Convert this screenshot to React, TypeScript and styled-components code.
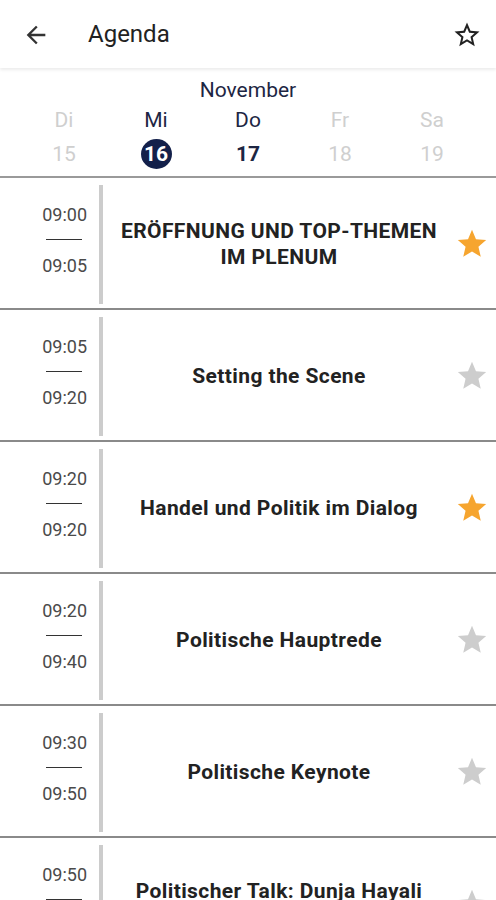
import styled, { createGlobalStyle } from 'styled-components';

interface Session {
    start: string;
    end: string;
    title: string[];
    favorite: boolean;
}

const sessions: Session[] = [
    { start: '09:00', end: '09:05', title: ['ERÖFFNUNG UND TOP-THEMEN', 'IM PLENUM'], favorite: true },
    { start: '09:05', end: '09:20', title: ['Setting the Scene'], favorite: false },
    { start: '09:20', end: '09:20', title: ['Handel und Politik im Dialog'], favorite: true },
    { start: '09:20', end: '09:40', title: ['Politische Hauptrede'], favorite: false },
    { start: '09:30', end: '09:50', title: ['Politische Keynote'], favorite: false },
    { start: '09:50', end: '10:20', title: ['Politischer Talk: Dunja Hayali', 'im Gespräch'], favorite: false },
];

const days = [
    { label: 'Di', num: '15', state: 'off' },
    { label: 'Mi', num: '16', state: 'selected' },
    { label: 'Do', num: '17', state: 'on' },
    { label: 'Fr', num: '18', state: 'off' },
    { label: 'Sa', num: '19', state: 'off' },
] as const;

type DayState = 'off' | 'on' | 'selected';

const STAR = 'M12 17.27L18.18 21l-1.64-7.03L22 9.24l-7.19-.61L12 2 9.19 8.63 2 9.24l5.46 4.73L5.82 21z';
const STAR_BORDER =
    'M22 9.24l-7.19-.62L12 2 9.19 8.63 2 9.24l5.46 4.73L5.82 21 12 17.27 18.18 21l-1.63-7.03L22 9.24zM12 15.4l-3.76 2.27 1-4.28-3.32-2.88 4.38-.38L12 6.1l1.71 4.04 4.38.38-3.32 2.88 1 4.28L12 15.4z';
const ARROW_BACK = 'M20 11H7.83l5.59-5.59L12 4l-8 8 8 8 1.41-1.41L7.83 13H20v-2z';

const App = () => {
    return (
        <>
            <GlobalStyle />
            <Page>
                <TopBar>
                    <IconButton>
                        <svg width='28' height='28' viewBox='0 0 24 24'>
                            <path d={ARROW_BACK} fill='#333' />
                        </svg>
                    </IconButton>
                    <Title>Agenda</Title>
                    <IconButton>
                        <svg width='30' height='30' viewBox='0 0 24 24'>
                            <path d={STAR_BORDER} fill='#222' />
                        </svg>
                    </IconButton>
                </TopBar>

                <Calendar>
                    <Month>November</Month>
                    <DayGrid>
                        {days.map((d) => (
                            <Day key={d.num}>
                                <DayLabel $state={d.state}>{d.label}</DayLabel>
                                <DayNumber $state={d.state}>{d.num}</DayNumber>
                            </Day>
                        ))}
                    </DayGrid>
                </Calendar>

                {sessions.map((s, index) => (
                    <Row key={index}>
                        <Times>
                            <span>{s.start}</span>
                            <Dash />
                            <span>{s.end}</span>
                        </Times>
                        <Bar />
                        <SessionTitle>
                            {s.title.map((line) => (
                                <div key={line}>{line}</div>
                            ))}
                        </SessionTitle>
                        <StarCell>
                            <svg width='34' height='34' viewBox='0 0 24 24'>
                                <path d={STAR} fill={s.favorite ? '#f6a52f' : '#cdcdcd'} />
                            </svg>
                        </StarCell>
                    </Row>
                ))}
            </Page>
        </>
    );
};

export default App;

const GlobalStyle = createGlobalStyle`
    body {
        margin: 0;
        background: #ffffff;
        font-family: Roboto, 'Liberation Sans', sans-serif;
        overflow: hidden;
    }
`;

const Page = styled.div`
    width: 496px;
    height: 900px;
    overflow: hidden;
    background: #fff;
`;

const TopBar = styled.div`
    position: relative;
    z-index: 1;
    height: 68px;
    display: flex;
    align-items: center;
    padding: 0 14px 0 21px;
    box-shadow: 0 2px 3px rgba(0, 0, 0, 0.08);
`;

const IconButton = styled.div`
    width: 30px;
    height: 30px;
    display: flex;
    align-items: center;
    justify-content: center;
    margin-top: 2px;
`;

const Title = styled.div`
    flex: 1;
    margin-left: 37px;
    font-size: 24px;
    color: #222;
`;

const Calendar = styled.div`
    padding: 9px 18px 7px;
    border-bottom: 2px solid #9a9a9a;
`;

const Month = styled.div`
    text-align: center;
    font-size: 21px;
    line-height: 26px;
    color: #1d2643;
`;

const DayGrid = styled.div`
    display: grid;
    grid-template-columns: repeat(5, 1fr);
    margin-top: 3px;
`;

const Day = styled.div`
    display: flex;
    flex-direction: column;
    align-items: center;
    gap: 5px;
`;

const DayLabel = styled.div<{ $state: DayState }>`
    font-size: 21px;
    line-height: 28px;
    color: ${(p) => (p.$state === 'off' ? '#cfcfcf' : '#1d2643')};
`;

const DayNumber = styled.div<{ $state: DayState }>`
    width: 31px;
    height: 30px;
    border-radius: 50%;
    display: flex;
    align-items: center;
    justify-content: center;
    font-size: 21px;
    font-weight: ${(p) => (p.$state === 'off' ? 400 : 700)};
    color: ${(p) => (p.$state === 'off' ? '#cfcfcf' : p.$state === 'selected' ? '#fff' : '#1d2643')};
    background: ${(p) => (p.$state === 'selected' ? '#13204a' : 'transparent')};
`;

const Row = styled.div`
    height: 130px;
    display: grid;
    grid-template-columns: 99px 4px 1fr 41px;
    border-bottom: 2px solid #8a8a8a;
`;

const Times = styled.div`
    display: flex;
    flex-direction: column;
    align-items: flex-end;
    justify-content: center;
    padding: 0 12px 6px 0;
    font-size: 18px;
    line-height: 22px;
    color: #4a4a4a;
`;

const Dash = styled.div`
    width: 36px;
    height: 1px;
    background: #333;
    margin: 13px 5px 15px 0;
`;

const Bar = styled.div`
    background: #cccccc;
    margin: 7px 0 4px;
`;

const SessionTitle = styled.div`
    display: flex;
    flex-direction: column;
    justify-content: center;
    align-items: center;
    text-align: center;
    font-size: 21px;
    font-weight: 700;
    letter-spacing: 0.4px;
    line-height: 26px;
    color: #222;
    padding-top: 1px;
`;

const StarCell = styled.div`
    display: flex;
    align-items: center;
    justify-content: flex-start;
    padding-top: 1px;
`;
